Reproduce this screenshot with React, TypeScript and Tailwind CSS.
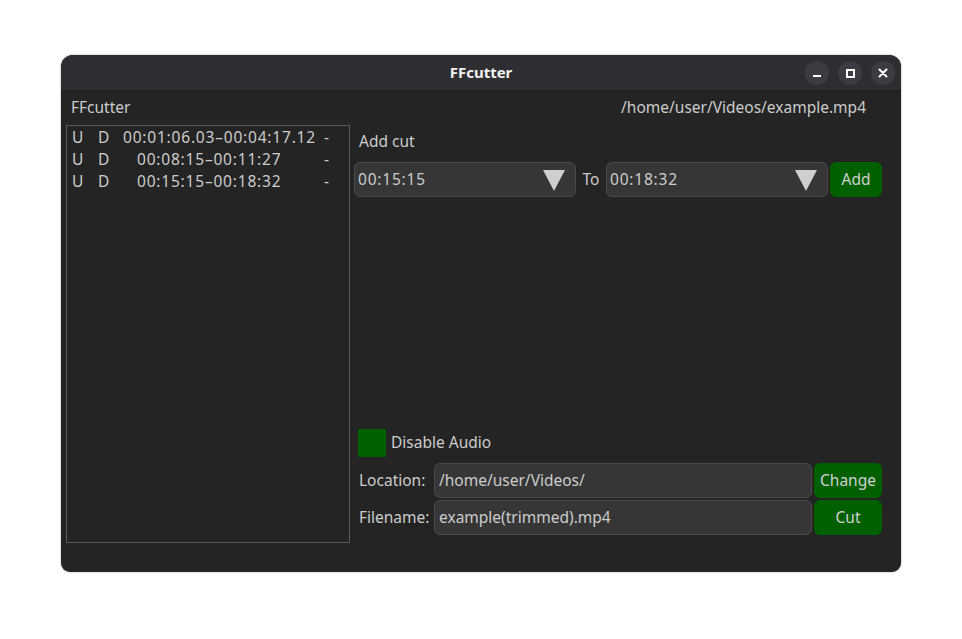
import React from 'react'

const cuts = [
  { range: '00:01:06.03–00:04:17.12', indent: 'pl-[1px]' },
  { range: '00:08:15–00:11:27', indent: 'pl-[15px]' },
  { range: '00:15:15–00:18:32', indent: 'pl-[15px]' },
]

function TimeSelect({ value }: { value: string }) {
  return (
    <div className="flex items-center justify-between w-[222px] h-[35px] rounded-[6px] border border-[#4a4a4a] bg-[#363636] pl-[3px] pr-[10px]">
      <span className="tracking-[0.8px]">{value}</span>
      <svg width="22" height="22" viewBox="0 0 22 22">
        <polygon points="0,1 22,1 11,22" fill="#cfcfcf" />
      </svg>
    </div>
  )
}

function TitleButton({ children }: { children: React.ReactNode }) {
  return (
    <div className="flex items-center justify-center w-[24px] h-[24px] rounded-full bg-[#3c3c40]">
      {children}
    </div>
  )
}

export default function App() {
  return (
    <div className="min-h-screen bg-white pt-[55px] pl-[61px] text-[15.5px] text-[#cccccc] font-['Noto_Sans',sans-serif]">
      <div className="w-[840px] h-[517px] flex flex-col rounded-t-[12px] rounded-b-[9px] overflow-hidden bg-[#242424] shadow-[0_0_2px_rgba(0,0,0,0.4)]">
        {/* header bar */}
        <div className="relative h-[36px] flex items-center justify-center bg-[#2e2e32] border-b border-[#1e1e20]">
          <span className="font-bold text-[15px] text-[#f2f2f2]">FFcutter</span>
          <div className="absolute right-[6px] top-[6px] flex gap-[9px]">
            <TitleButton>
              <div className="w-[8px] h-[2px] bg-white mt-[6px]" />
            </TitleButton>
            <TitleButton>
              <div className="w-[9px] h-[9px] border-2 border-white" />
            </TitleButton>
            <TitleButton>
              <svg width="10" height="10" viewBox="0 0 10 10">
                <path d="M1.5 1.5 L8.5 8.5 M8.5 1.5 L1.5 8.5" stroke="white" strokeWidth="2" strokeLinecap="round" />
              </svg>
            </TitleButton>
          </div>
        </div>

        <div className="flex flex-col pl-[5px] pr-[19px]">
          <div className="h-[34px] flex items-center justify-between pl-[5px] pr-[16px]">
            <span>FFcutter</span>
            <span>/home/user/Videos/example.mp4</span>
          </div>

          <div className="flex gap-[4px]">
            <div className="w-[284px] h-[418px] border border-[#5a5a5a] pt-[1px]">
              {cuts.map((c) => (
                <div key={c.range} className="flex items-center h-[22px] pl-[5px]">
                  <span className="w-[26px]">U</span>
                  <span className="w-[24px]">D</span>
                  <span className={`w-[202px] tracking-[0.8px] ${c.indent}`}>{c.range}</span>
                  <span>-</span>
                </div>
              ))}
            </div>

            <div className="flex-1 h-[418px] flex flex-col pb-[8px]">
              <div className="h-[34px] flex items-center pl-[5px]">Add cut</div>
              <div className="mt-[3px] flex items-center">
                <TimeSelect value="00:15:15" />
                <span className="w-[30px] text-center">To</span>
                <TimeSelect value="00:18:32" />
                <button className="ml-[2px] w-[52px] h-[35px] rounded-[6px] bg-[#006000] text-[#d0d0d0]">Add</button>
              </div>

              <div className="flex-1" />

              <div className="h-[28px] flex items-center pl-[4px] gap-[5px]">
                <div className="w-[28px] h-[28px] bg-[#006000]" />
                <span>Disable Audio</span>
              </div>
              <div className="mt-[6px] flex items-center h-[35px]">
                <span className="w-[80px] pl-[5px]">Location:</span>
                <div className="w-[378px] h-[35px] flex items-center rounded-[6px] border border-[#4a4a4a] bg-[#363636] pl-[4px]">
                  /home/user/Videos/
                </div>
                <button className="ml-[2px] w-[68px] h-[35px] rounded-[6px] bg-[#006000] text-[#d0d0d0]">Change</button>
              </div>
              <div className="mt-[2px] flex items-center h-[35px]">
                <span className="w-[80px] pl-[5px]">Filename:</span>
                <div className="w-[378px] h-[35px] flex items-center rounded-[6px] border border-[#4a4a4a] bg-[#363636] pl-[4px]">
                  example(trimmed).mp4
                </div>
                <button className="ml-[2px] w-[68px] h-[35px] rounded-[6px] bg-[#006000] text-[#d0d0d0]">Cut</button>
              </div>
            </div>
          </div>
        </div>
      </div>
    </div>
  )
}
